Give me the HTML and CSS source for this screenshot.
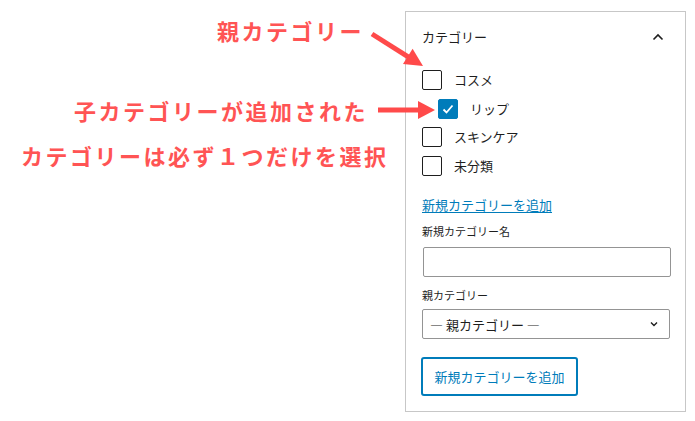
FILE: index.html
```html
<!DOCTYPE html>
<html lang="ja">
<head>
<meta charset="utf-8">
<link rel="stylesheet" href="styles.css">
</head>
<body>
<div class="page">
  <div class="notes">
    <div class="note note-parent">親カテゴリー</div>
    <div class="note note-child">子カテゴリーが追加された</div>
    <div class="note note-rule">カテゴリーは必ず１つだけを選択</div>
  </div>
  <section class="panel">
    <div class="panel-header">
      <span class="panel-title">カテゴリー</span>
      <svg class="chev-up" width="12" height="8" viewBox="0 0 12 8"><polyline points="1.5,6.5 6,2 10.5,6.5" fill="none" stroke="#1e1e1e" stroke-width="1.6"/></svg>
    </div>
    <ul class="cat-list">
      <li class="cat"><span class="box"></span><span class="cat-label">コスメ</span></li>
      <li class="cat child"><span class="box checked"><svg width="20" height="20" viewBox="0 0 20 20"><polyline points="5.5,10.5 8.5,13.5 14.5,6.5" fill="none" stroke="#fff" stroke-width="1.8"/></svg></span><span class="cat-label">リップ</span></li>
      <li class="cat"><span class="box"></span><span class="cat-label">スキンケア</span></li>
      <li class="cat"><span class="box"></span><span class="cat-label">未分類</span></li>
    </ul>
    <a class="add-link" href="#">新規カテゴリーを追加</a>
    <div class="field-label first">新規カテゴリー名</div>
    <div class="input"></div>
    <div class="field-label">親カテゴリー</div>
    <div class="select"><span>— 親カテゴリー —</span><svg width="8" height="6" viewBox="0 0 8 6"><polyline points="1,1.5 4,4.5 7,1.5" fill="none" stroke="#1e1e1e" stroke-width="1.4"/></svg></div>
    <button class="add-btn">新規カテゴリーを追加</button>
  </section>
  <svg class="arrows" width="695" height="421" viewBox="0 0 695 421">
    <line x1="372" y1="34" x2="409" y2="57.3" stroke="#ff4a4a" stroke-width="5"/>
    <polygon points="423,66 403,64 412.6,48.8" fill="#ff4a4a"/>
    <line x1="378" y1="110" x2="420" y2="110" stroke="#ff4a4a" stroke-width="5"/>
    <polygon points="418,101 435,110 418,119" fill="#ff4a4a"/>
  </svg>
</div>
</body>
</html>
```
FILE: styles.css
```css
* { box-sizing: border-box; }
html, body { margin: 0; padding: 0; background: #fff; }
body {
  width: 695px;
  height: 421px;
  overflow: hidden;
  font-family: "Noto Sans CJK JP", "Noto Sans", sans-serif;
  color: #1e1e1e;
}
.page {
  position: relative;
  width: 695px;
  height: 421px;
  display: flex;
  padding-top: 11px;
}
.notes {
  position: relative;
  width: 405px;
  flex: none;
}
.note {
  position: absolute;
  font-size: 22px;
  font-weight: 700;
  letter-spacing: 2.5px;
  line-height: 30px;
  color: #ff5454;
  white-space: nowrap;
}
.note-parent { left: 217px; top: 4px; }
.note-child { left: 74px; top: 84px; }
.note-rule { left: 21px; top: 129px; }

.panel {
  width: 281px;
  height: 401px;
  border: 1px solid #c7c7c7;
  display: flex;
  flex-direction: column;
  padding: 0 16px;
}
.panel-header {
  height: 50px;
  display: flex;
  align-items: center;
  justify-content: space-between;
  padding-right: 5px;
}
.panel-title {
  font-size: 13px;
  line-height: 20px;
}
.chev-up { display: block; margin-top: -1px; }
.cat-list {
  list-style: none;
  margin: 8px 0 0;
  padding: 0;
  display: flex;
  flex-direction: column;
  gap: 8.7px;
}
.cat {
  display: flex;
  align-items: center;
  height: 20px;
  gap: 12px;
}
.cat.child { padding-left: 16px; }
.box {
  width: 20px;
  height: 20px;
  border: 1px solid #1e1e1e;
  border-radius: 2px;
  flex: none;
  display: block;
}
.box.checked {
  background: #007cba;
  border-color: #007cba;
  position: relative;
}
.box.checked svg { position: absolute; left: -1px; top: -1px; }
.cat-label {
  font-size: 13px;
  line-height: 20px;
}
.add-link {
  margin-top: 19px;
  font-size: 13px;
  line-height: 20px;
  color: #007cba;
  text-decoration: underline;
  text-underline-offset: 2px;
  align-self: flex-start;
}
.field-label {
  font-size: 11px;
  line-height: 16px;
  margin-top: 10px;
}
.field-label.first { margin-top: 8px; }
.input {
  margin-top: 8px;
  margin-left: 1px;
  width: 248px;
  height: 30px;
  border: 1px solid #949494;
  border-radius: 2px;
}
.select {
  margin-top: 6px;
  width: 248px;
  height: 30px;
  border: 1px solid #949494;
  border-radius: 2px;
  display: flex;
  align-items: center;
  justify-content: space-between;
  padding: 0 11px 0 7px;
  font-size: 13px;
}
.select svg { display: block; }
.add-btn {
  margin-top: 18px;
  margin-left: -1px;
  align-self: flex-start;
  width: 157px;
  height: 39px;
  border: 2px solid #007cba;
  border-radius: 3px;
  background: #fff;
  color: #007cba;
  font-family: inherit;
  font-size: 13px;
  padding: 0;
}
.arrows {
  position: absolute;
  left: 0;
  top: 0;
  pointer-events: none;
}
```
